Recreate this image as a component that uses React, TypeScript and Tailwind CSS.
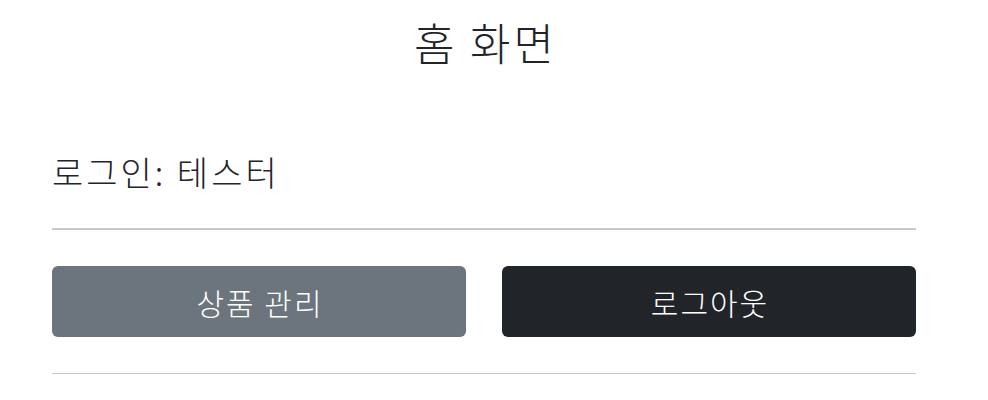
import React from "react";

export default function App() {
  const font = { fontFamily: '"Noto Sans CJK KR", "Noto Sans", sans-serif' };
  return (
    <div className="w-[988px] h-[400px] bg-white text-[#212529] overflow-hidden" style={font}>
      <div className="ml-[52px] w-[864px] flex flex-col pt-[16px]">
        <h2 className="text-center text-[44px] leading-[52px] font-light tracking-[3px] pl-[3px]">홈 화면</h2>
        <p className="mt-[84px] text-[34px] leading-[40px] font-light tracking-[3px]">로그인: 테스터</p>
        <div className="mt-[36px] h-[2px] bg-[#c8c9ca]" />
        <div className="mt-[36px] grid grid-cols-2 gap-[36px]">
          <button className="h-[71px] rounded-[6px] bg-[#6c757d] text-white text-[30px] leading-none font-light tracking-[2px] pl-[2px] flex items-center justify-center">
            상품 관리
          </button>
          <button className="h-[71px] rounded-[6px] bg-[#212529] text-white text-[30px] leading-none font-light tracking-[2px] pl-[2px] flex items-center justify-center">
            로그아웃
          </button>
        </div>
        <div className="mt-[36px] h-px bg-[#c8c9ca]" />
      </div>
    </div>
  );
}
